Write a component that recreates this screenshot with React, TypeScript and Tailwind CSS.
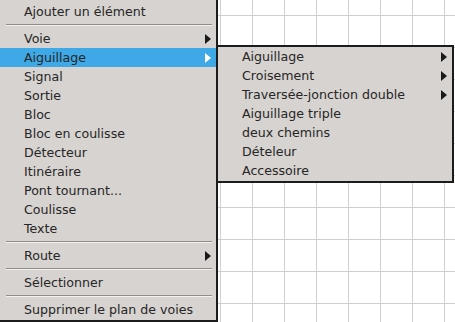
import React from "react";

type Item = { kind: "item"; label: string; arrow?: boolean; active?: boolean } | { kind: "sep" };

const mainItems: Item[] = [
  { kind: "item", label: "Ajouter un élément" },
  { kind: "sep" },
  { kind: "item", label: "Voie", arrow: true },
  { kind: "item", label: "Aiguillage", arrow: true, active: true },
  { kind: "item", label: "Signal" },
  { kind: "item", label: "Sortie" },
  { kind: "item", label: "Bloc" },
  { kind: "item", label: "Bloc en coulisse" },
  { kind: "item", label: "Détecteur" },
  { kind: "item", label: "Itinéraire" },
  { kind: "item", label: "Pont tournant..." },
  { kind: "item", label: "Coulisse" },
  { kind: "item", label: "Texte" },
  { kind: "sep" },
  { kind: "item", label: "Route", arrow: true },
  { kind: "sep" },
  { kind: "item", label: "Sélectionner" },
  { kind: "sep" },
  { kind: "item", label: "Supprimer le plan de voies" },
];

const subItems: Item[] = [
  { kind: "item", label: "Aiguillage", arrow: true },
  { kind: "item", label: "Croisement", arrow: true },
  { kind: "item", label: "Traversée-jonction double", arrow: true },
  { kind: "item", label: "Aiguillage triple" },
  { kind: "item", label: "deux chemins" },
  { kind: "item", label: "Dételeur" },
  { kind: "item", label: "Accessoire" },
];

function Arrow({ white }: { white?: boolean }) {
  return (
    <svg width="6" height="10" viewBox="0 0 6 10" className="shrink-0 -translate-y-px">
      <polygon points="0,0 6,5 0,10" fill={white ? "#ffffff" : "#1a1a1a"} />
    </svg>
  );
}

function MenuRows({ items }: { items: Item[] }) {
  return (
    <>
      {items.map((it, i) =>
        it.kind === "sep" ? (
          <div key={i} className="h-[8px] pt-[3px] pl-[6px] pr-[4px]">
            <div className="h-px bg-[#8f8c8a]" />
            <div className="h-px bg-[#f4f2f0]" />
          </div>
        ) : (
          <div
            key={i}
            className={
              "h-[19px] flex items-center justify-between pt-[2px] pl-[24px] pr-[5px] " +
              (it.active ? "bg-[#3fa8e6]" : "")
            }
          >
            <span className="whitespace-nowrap">{it.label}</span>
            {it.arrow ? <Arrow white={it.active} /> : null}
          </div>
        )
      )}
    </>
  );
}

export default function App() {
  return (
    <div
      className="relative w-[455px] h-[322px] overflow-hidden bg-white bg-[linear-gradient(to_right,#cfcfcf_1px,transparent_1px),linear-gradient(to_bottom,#cfcfcf_1px,transparent_1px)] bg-[size:32px_32px] bg-[position:28px_15px] text-[12.6px] text-[#262626] leading-none"
      style={{ fontFamily: '"DejaVu Sans", sans-serif' }}
    >
      <div className="absolute left-0 top-0 w-[218px] h-[322px] bg-[#d7d3d0] border-r-2 border-b-2 border-[#1c1c1c] pt-[2px]">
        <MenuRows items={mainItems} />
      </div>
      <div className="absolute left-[216px] top-[45px] w-[238px] bg-[#d7d3d0] border-2 border-[#1c1c1c] pb-[1px]">
        <MenuRows items={subItems} />
      </div>
    </div>
  );
}
